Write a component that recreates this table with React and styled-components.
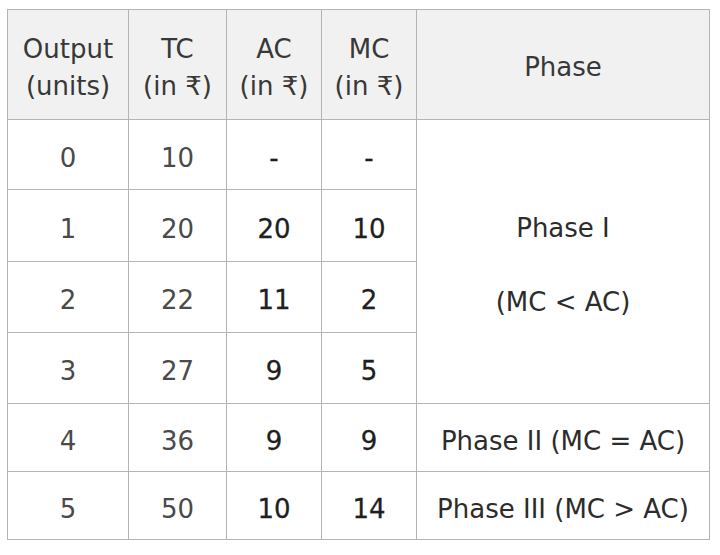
import React from "react";
import styled, { createGlobalStyle } from "styled-components";

const GlobalStyle = createGlobalStyle`
  body {
    margin: 0;
    background: #ffffff;
    font-family: "DejaVu Sans", "Noto Sans", sans-serif;
  }
`;

const Page = styled.div`
  padding: 9px 7px;
`;

const CostTable = styled.table`
  width: 702px;
  table-layout: fixed;
  border-collapse: collapse;
  font-size: 26px;
  line-height: 37px;
  color: #3d3d3d;
`;

const HeadCell = styled.th`
  background: #f1f1f1;
  border: 1px solid #b4b4b4;
  font-weight: 400;
  text-align: center;
  vertical-align: middle;
  padding: 6px 0 0;
  color: #383838;
`;

const Row = styled.tr`
  height: ${props => props.$h}px;
`;

const Cell = styled.td`
  border: 1px solid #b4b4b4;
  text-align: center;
  vertical-align: middle;
  padding: 7px 0 0;
  color: ${props => (props.$strong ? "#1f1f1f" : "#4a4a4a")};
  -webkit-text-stroke: ${props => (props.$strong ? "0.3px #1f1f1f" : "0")};
`;

const PhaseCell = styled(Cell)`
  color: #2c2c2c;
  white-space: nowrap;
`;

const rows = [
  { out: "0", tc: "10", ac: "-", mc: "-", h: 70 },
  { out: "1", tc: "20", ac: "20", mc: "10", h: 72 },
  { out: "2", tc: "22", ac: "11", mc: "2", h: 71 },
  { out: "3", tc: "27", ac: "9", mc: "5", h: 71 },
  { out: "4", tc: "36", ac: "9", mc: "9", h: 68, phase: "Phase II (MC = AC)" },
  { out: "5", tc: "50", ac: "10", mc: "14", h: 68, phase: "Phase III (MC > AC)" }
];

export default function App() {
  return (
    <>
      <GlobalStyle />
      <Page>
        <CostTable>
          <colgroup>
            <col style={{ width: 121 }} />
            <col style={{ width: 98 }} />
            <col style={{ width: 95 }} />
            <col style={{ width: 95 }} />
            <col style={{ width: 293 }} />
          </colgroup>
          <thead>
            <Row $h={110}>
              <HeadCell>Output<br />(units)</HeadCell>
              <HeadCell>TC<br />(in ₹)</HeadCell>
              <HeadCell>AC<br />(in ₹)</HeadCell>
              <HeadCell>MC<br />(in ₹)</HeadCell>
              <HeadCell>Phase</HeadCell>
            </Row>
          </thead>
          <tbody>
            {rows.map((r, i) => (
              <Row key={r.out} $h={r.h}>
                <Cell>{r.out}</Cell>
                <Cell>{r.tc}</Cell>
                <Cell $strong>{r.ac}</Cell>
                <Cell $strong>{r.mc}</Cell>
                {i === 0 && (
                  <PhaseCell rowSpan={4}>
                    Phase I<br /><br />(MC &lt; AC)
                  </PhaseCell>
                )}
                {r.phase && <PhaseCell>{r.phase}</PhaseCell>}
              </Row>
            ))}
          </tbody>
        </CostTable>
      </Page>
    </>
  );
}
